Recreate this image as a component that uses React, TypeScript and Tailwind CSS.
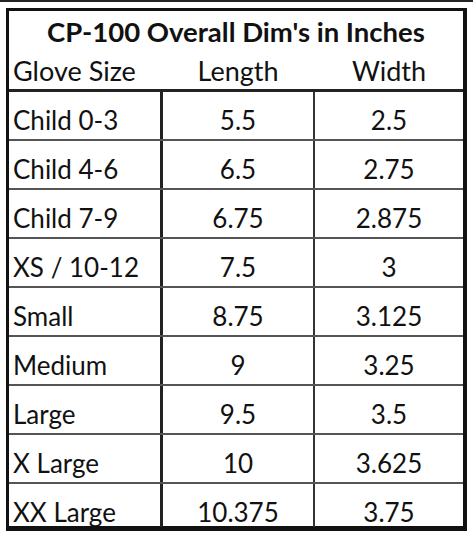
import React from "react";

const rows: [string, string, string][] = [
  ["Child 0-3", "5.5", "2.5"],
  ["Child 4-6", "6.5", "2.75"],
  ["Child 7-9", "6.75", "2.875"],
  ["XS / 10-12", "7.5", "3"],
  ["Small", "8.75", "3.125"],
  ["Medium", "9", "3.25"],
  ["Large", "9.5", "3.5"],
  ["X Large", "10", "3.625"],
  ["XX Large", "10.375", "3.75"],
];

export default function App() {
  return (
    <div
      className="w-[473px] h-[538px] bg-white text-[#111]"
      style={{ fontFamily: "Lato, 'Liberation Sans', sans-serif" }}
    >
      <div className="h-[2px] bg-[#222]" />
      <div className="ml-[6px] mt-[6px] w-[461px] border-l-[3px] border-t-[3px] border-r-[4px] border-b-[5px] border-[#111] bg-white">
        <div className="h-[78px] border-b-[3px] border-[#222] box-content">
          <div className="pt-[6px] text-center text-[27.5px] font-bold leading-[30px]">
            CP-100 Overall Dim's in Inches
          </div>
          <div className="mt-[9px] grid grid-cols-[151px_3px_150px_2px_148px] text-[27px] leading-[30px]">
            <div className="pl-[4px]">Glove Size</div>
            <div />
            <div className="text-center">Length</div>
            <div />
            <div className="text-center">Width</div>
          </div>
        </div>
        {rows.map((r, i) => {
          const last = i === rows.length - 1;
          return (
            <div
              key={r[0]}
              className={
                last
                  ? "grid grid-cols-[151px_3px_150px_2px_148px] h-[42px] text-[26px] leading-[30px]"
                  : "grid grid-cols-[151px_3px_150px_2px_148px] h-[49px] border-b-2 border-[#555] text-[26px] leading-[30px]"
              }
            >
              <div className="pl-[4px] pt-[13px] whitespace-nowrap">{r[0]}</div>
              <div className="bg-[#222]" />
              <div className="pt-[13px] text-center">{r[1]}</div>
              <div className="bg-[#333]" />
              <div className="pt-[13px] text-center">{r[2]}</div>
            </div>
          );
        })}
      </div>
    </div>
  );
}
